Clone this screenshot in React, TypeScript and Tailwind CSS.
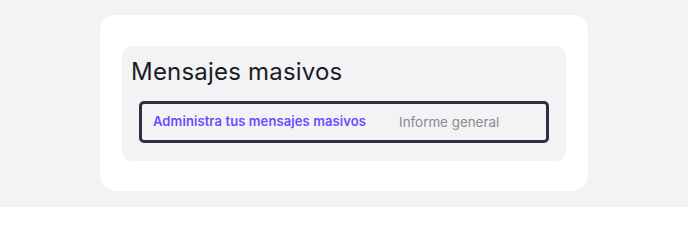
export default function App() {
  return (
    <div className="w-[688px] h-[207px] bg-[#f3f3f5] pt-[15px] pl-[100px] font-['Inter',sans-serif]">
      <div className="w-[488px] h-[176px] bg-white rounded-[16px] pt-[31px] px-[22px]">
        <div className="bg-[#f3f3f5] rounded-[10px] h-[115px] pt-[12px] px-[9px]">
          <h1 className="text-[24px] leading-[28px] tracking-[0.2px] text-[#1c1c24] font-normal">Mensajes masivos</h1>
          <div className="mt-[15px] ml-[8px] w-[410px] h-[42px] border-[3px] border-[#2e3040] rounded-[5px] flex items-center pl-[11px] gap-[33px] text-[13px]">
            <span className="font-semibold tracking-[0.1px] text-[#6a4cff]">Administra tus mensajes masivos</span>
            <span className="text-[13.4px] text-[#8a8a8f]">Informe general</span>
          </div>
        </div>
      </div>
    </div>
  )
}
